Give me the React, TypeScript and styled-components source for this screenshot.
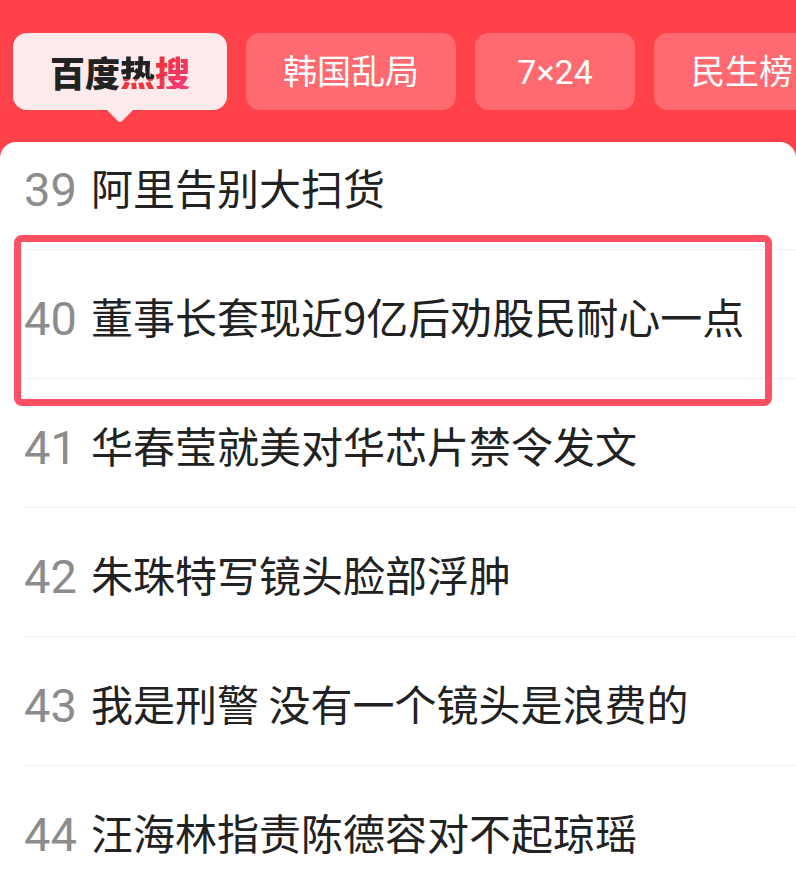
import React from 'react';
import styled, { createGlobalStyle } from 'styled-components';

const colors = {
  red: '#ff4249',
  tab: '#ff6a70',
  tabActive: '#fdebec',
  text: '#222222',
  num: '#8c8c8c',
  line: '#efefef',
  mark: '#ff5063',
};

const GlobalStyle = createGlobalStyle`
  html, body {
    margin: 0;
    padding: 0;
    background: #ffffff;
    overflow: hidden;
  }
  * {
    box-sizing: border-box;
  }
`;

const Page = styled.div`
  width: 796px;
  height: 874px;
  overflow: hidden;
  display: flex;
  flex-direction: column;
  background: ${colors.red};
  font-family: 'Noto Sans CJK SC', 'Noto Sans', sans-serif;
`;

const TabBar = styled.div`
  display: flex;
  gap: 19px;
  padding: 33px 0 32px 13px;
  white-space: nowrap;
  flex: none;
`;

const Tab = styled.div<{ $active?: boolean }>`
  position: relative;
  flex: none;
  min-width: 160px;
  height: 77px;
  padding: 0 37px;
  display: flex;
  align-items: center;
  justify-content: center;
  border-radius: 14px;
  background: ${(p) => (p.$active ? colors.tabActive : colors.tab)};
  color: #ffffff;
  font-family: Roboto, 'Noto Sans CJK SC', sans-serif;
  font-size: 34px;
  line-height: 1;

  ${(p) =>
    p.$active &&
    `
    &::after {
      content: '';
      position: absolute;
      left: 50%;
      bottom: -9px;
      width: 20px;
      height: 20px;
      margin-left: -10px;
      background: ${colors.tabActive};
      border-radius: 3px;
      transform: rotate(45deg);
    }
  `}
`;

const Logo = styled.span`
  display: flex;
  font-family: 'Noto Sans CJK SC', sans-serif;
  font-size: 35px;
  font-weight: 900;
  color: ${colors.text};

  .hot {
    background: linear-gradient(to bottom, ${colors.text} 72%, #f0343c 72%);
    -webkit-background-clip: text;
    background-clip: text;
    color: transparent;
  }
  .search {
    background: linear-gradient(135deg, #f2333a 20%, #f23b7c 90%);
    -webkit-background-clip: text;
    background-clip: text;
    color: transparent;
  }
`;

const Panel = styled.div`
  flex: 1;
  background: #ffffff;
  border-radius: 16px 16px 0 0;
  overflow: hidden;
`;

// list is scrolled a little under the tab bar
const List = styled.div`
  margin-top: -21px;
`;

const Row = styled.div`
  position: relative;
  height: 129px;
  margin-left: 24px;
  display: flex;
  align-items: center;
  padding-top: 4px;
  border-bottom: 1px solid ${colors.line};
`;

const Num = styled.span`
  width: 67px;
  flex: none;
  padding-top: 4px;
  font-family: Roboto, 'Noto Sans', sans-serif;
  font-size: 47px;
  color: ${colors.num};
  line-height: 1;
`;

const Title = styled.span`
  font-size: 42px;
  color: ${colors.text};
  line-height: 1.2;
  white-space: nowrap;
`;

const Mark = styled.div`
  position: absolute;
  top: -15px;
  bottom: -28px;
  left: -10px;
  right: 24px;
  border: 7px solid ${colors.mark};
  border-radius: 8px;
  pointer-events: none;
  z-index: 2;
`;

const tabs = ['韩国乱局', '7×24', '民生榜'];

const items = [
  { n: 39, title: '阿里告别大扫货' },
  { n: 40, title: '董事长套现近9亿后劝股民耐心一点', marked: true },
  { n: 41, title: '华春莹就美对华芯片禁令发文' },
  { n: 42, title: '朱珠特写镜头脸部浮肿' },
  { n: 43, title: '我是刑警 没有一个镜头是浪费的' },
  { n: 44, title: '汪海林指责陈德容对不起琼瑶' },
];

export default function App() {
  return (
    <Page>
      <GlobalStyle />
      <TabBar>
        <Tab $active>
          <Logo>
            百度<span className="hot">热</span>
            <span className="search">搜</span>
          </Logo>
        </Tab>
        {tabs.map((t) => (
          <Tab key={t}>{t}</Tab>
        ))}
      </TabBar>
      <Panel>
        <List>
          {items.map((it) => (
            <Row key={it.n}>
              <Num>{it.n}</Num>
              <Title>{it.title}</Title>
              {it.marked && <Mark />}
            </Row>
          ))}
        </List>
      </Panel>
    </Page>
  );
}
